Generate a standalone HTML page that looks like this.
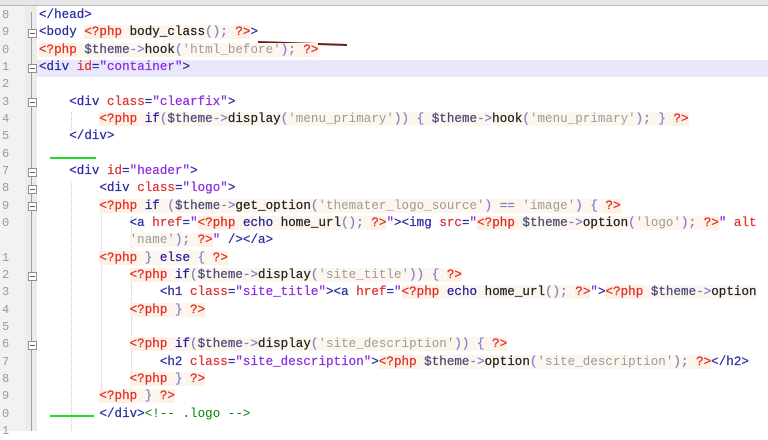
<!DOCTYPE html><html><head><meta charset="utf-8"><style>
body{margin:0;width:768px;height:431px;overflow:hidden;background:#fff;position:relative;font-family:"Liberation Mono",monospace;}
.top{position:absolute;left:0;top:0;width:768px;height:5px;background:#e6e6e6;border-bottom:1px solid #b8b8b8}
.gut{position:absolute;left:0;top:6px;width:25px;height:425px;background:#f2f2f2}
.fold{position:absolute;left:25px;top:6px;width:12px;height:425px;background:#ececec}
.hl{position:absolute;left:37px;top:60px;width:731px;height:17px;background:#e8e8fa}
.ln{position:absolute;left:0;width:22px;font-size:12px;color:#9a9a9a;line-height:17px;text-align:left;padding-left:2px}
.r{position:absolute;left:39px;font-size:12.5px;letter-spacing:0.05px;line-height:17px;white-space:pre;color:#222;font-weight:normal;-webkit-text-stroke:0.25px}
.t{color:#2a2aa0}.a{color:#e03030}.s{color:#8a2be2}.p{color:#e02a2a;background:#fdf1e4}.v{color:#4a4a7a;background:#fdf6ee}.f{color:#202020;background:#fdf6ee}.q{color:#9a9a9a;background:#fdf6ee;-webkit-text-stroke:0}.o{color:#8080c8;background:#fdf6ee}.k{color:#2020a0;background:#fdf6ee}.c{color:#008000;-webkit-text-stroke:0}.b{background:#fdf6ee}
.fb{position:absolute;left:28px;width:7px;height:7px;border:1px solid #909090;background:#fff}
.fb:after{content:"";position:absolute;left:1px;top:3px;width:5px;height:1px;background:#606060}
.vl{position:absolute;left:31px;width:1px;background:#a0a0a0}
.ig{position:absolute;width:0;border-left:1px dotted #c8c8c8}
.gr{position:absolute;height:2px;background:#22dd22}
</style></head><body>
<div class="top"></div><div class="gut"></div><div class="fold"></div><div class="hl"></div>
<div class="vl" style="top:12px;height:419px"></div>
<div class="fb" style="top:29px"></div><div class="fb" style="top:64px"></div><div class="fb" style="top:98px"></div><div class="fb" style="top:168px"></div><div class="fb" style="top:185px"></div><div class="fb" style="top:202px"></div><div class="fb" style="top:272px"></div><div class="fb" style="top:341px"></div>
<div class="ig" style="left:71px;top:112px;height:18px"></div>
<div class="ig" style="left:71px;top:182px;height:249px"></div>
<div class="ig" style="left:101px;top:199px;height:200px"></div>
<div class="ig" style="left:131px;top:216px;height:40px"></div>
<div class="ig" style="left:131px;top:268px;height:120px"></div>
<div class="gr" style="left:50px;top:157px;width:46px"></div>
<div class="gr" style="left:50px;top:415px;width:44px"></div>
<svg style="position:absolute;left:255px;top:40px" width="95" height="8"><path d="M3 2 L92 5" stroke="#6a1a1a" stroke-width="2" fill="none"/></svg>
<div class="ln" style="top:7px">8</div><div class="ln" style="top:24px">9</div><div class="ln" style="top:42px">0</div><div class="ln" style="top:59px">1</div><div class="ln" style="top:76px">2</div><div class="ln" style="top:94px">3</div><div class="ln" style="top:111px">4</div><div class="ln" style="top:128px">5</div><div class="ln" style="top:146px">6</div><div class="ln" style="top:163px">7</div><div class="ln" style="top:180px">8</div><div class="ln" style="top:198px">9</div><div class="ln" style="top:215px">0</div><div class="ln" style="top:250px">1</div><div class="ln" style="top:267px">2</div><div class="ln" style="top:284px">3</div><div class="ln" style="top:302px">4</div><div class="ln" style="top:319px">5</div><div class="ln" style="top:336px">6</div><div class="ln" style="top:354px">7</div><div class="ln" style="top:371px">8</div><div class="ln" style="top:388px">9</div><div class="ln" style="top:406px">0</div><div class="ln" style="top:423px">1</div>
<div class="r" style="top:7px"><span class="t">&lt;/head&gt;</span></div>
<div class="r" style="top:24px"><span class="t">&lt;body </span><span class="p">&lt;?php</span><span class="f"> body_class</span><span class="o">();</span><span class="b"> </span><span class="p">?&gt;</span><span class="t">&gt;</span></div>
<div class="r" style="top:42px"><span class="p">&lt;?php</span><span class="v"> $theme</span><span class="o">-&gt;</span><span class="f">hook</span><span class="o">(</span><span class="q">'html_before'</span><span class="o">);</span><span class="b"> </span><span class="p">?&gt;</span></div>
<div class="r" style="top:59px"><span class="t">&lt;div </span><span class="a">id</span><span class="t">=</span><span class="s">"container"</span><span class="t">&gt;</span></div>
<div class="r" style="top:94px">    <span class="t">&lt;div </span><span class="a">class</span><span class="t">=</span><span class="s">"clearfix"</span><span class="t">&gt;</span></div>
<div class="r" style="top:111px">        <span class="p">&lt;?php</span><span class="k"> if</span><span class="o">(</span><span class="v">$theme</span><span class="o">-&gt;</span><span class="f">display</span><span class="o">(</span><span class="q">'menu_primary'</span><span class="o">))</span><span class="b"> </span><span class="o">{</span><span class="v"> $theme</span><span class="o">-&gt;</span><span class="f">hook</span><span class="o">(</span><span class="q">'menu_primary'</span><span class="o">);</span><span class="b"> </span><span class="o">}</span><span class="b"> </span><span class="p">?&gt;</span></div>
<div class="r" style="top:128px">    <span class="t">&lt;/div&gt;</span></div>
<div class="r" style="top:163px">    <span class="t">&lt;div </span><span class="a">id</span><span class="t">=</span><span class="s">"header"</span><span class="t">&gt;</span></div>
<div class="r" style="top:180px">        <span class="t">&lt;div </span><span class="a">class</span><span class="t">=</span><span class="s">"logo"</span><span class="t">&gt;</span></div>
<div class="r" style="top:198px">        <span class="p">&lt;?php</span><span class="k"> if</span><span class="b"> </span><span class="o">(</span><span class="v">$theme</span><span class="o">-&gt;</span><span class="f">get_option</span><span class="o">(</span><span class="q">'themater_logo_source'</span><span class="o">)</span><span class="b"> </span><span class="o">==</span><span class="b"> </span><span class="q">'image'</span><span class="o">)</span><span class="b"> </span><span class="o">{</span><span class="b"> </span><span class="p">?&gt;</span></div>
<div class="r" style="top:215px">            <span class="t">&lt;a </span><span class="a">href</span><span class="t">=</span><span class="s">"</span><span class="p">&lt;?php</span><span class="k"> echo</span><span class="f"> home_url</span><span class="o">();</span><span class="b"> </span><span class="p">?&gt;</span><span class="s">"</span><span class="t">&gt;&lt;img </span><span class="a">src</span><span class="t">=</span><span class="s">"</span><span class="p">&lt;?php</span><span class="v"> $theme</span><span class="o">-&gt;</span><span class="f">option</span><span class="o">(</span><span class="q">'logo'</span><span class="o">);</span><span class="b"> </span><span class="p">?&gt;</span><span class="s">" </span><span class="a">alt</span></div>
<div class="r" style="top:232px">            <span class="q">'name'</span><span class="o">);</span><span class="b"> </span><span class="p">?&gt;</span><span class="s">"</span><span class="t"> /&gt;&lt;/a&gt;</span></div>
<div class="r" style="top:250px">        <span class="p">&lt;?php</span><span class="b"> </span><span class="o">}</span><span class="k"> else</span><span class="b"> </span><span class="o">{</span><span class="b"> </span><span class="p">?&gt;</span></div>
<div class="r" style="top:267px">            <span class="p">&lt;?php</span><span class="k"> if</span><span class="o">(</span><span class="v">$theme</span><span class="o">-&gt;</span><span class="f">display</span><span class="o">(</span><span class="q">'site_title'</span><span class="o">))</span><span class="b"> </span><span class="o">{</span><span class="b"> </span><span class="p">?&gt;</span></div>
<div class="r" style="top:284px">                <span class="t">&lt;h1 </span><span class="a">class</span><span class="t">=</span><span class="s">"site_title"</span><span class="t">&gt;&lt;a </span><span class="a">href</span><span class="t">=</span><span class="s">"</span><span class="p">&lt;?php</span><span class="k"> echo</span><span class="f"> home_url</span><span class="o">();</span><span class="b"> </span><span class="p">?&gt;</span><span class="s">"</span><span class="t">&gt;</span><span class="p">&lt;?php</span><span class="v"> $theme</span><span class="o">-&gt;</span><span class="f">option</span></div>
<div class="r" style="top:302px">            <span class="p">&lt;?php</span><span class="b"> </span><span class="o">}</span><span class="b"> </span><span class="p">?&gt;</span></div>
<div class="r" style="top:336px">            <span class="p">&lt;?php</span><span class="k"> if</span><span class="o">(</span><span class="v">$theme</span><span class="o">-&gt;</span><span class="f">display</span><span class="o">(</span><span class="q">'site_description'</span><span class="o">))</span><span class="b"> </span><span class="o">{</span><span class="b"> </span><span class="p">?&gt;</span></div>
<div class="r" style="top:354px">                <span class="t">&lt;h2 </span><span class="a">class</span><span class="t">=</span><span class="s">"site_description"</span><span class="t">&gt;</span><span class="p">&lt;?php</span><span class="v"> $theme</span><span class="o">-&gt;</span><span class="f">option</span><span class="o">(</span><span class="q">'site_description'</span><span class="o">);</span><span class="b"> </span><span class="p">?&gt;</span><span class="t">&lt;/h2&gt;</span></div>
<div class="r" style="top:371px">            <span class="p">&lt;?php</span><span class="b"> </span><span class="o">}</span><span class="b"> </span><span class="p">?&gt;</span></div>
<div class="r" style="top:388px">        <span class="p">&lt;?php</span><span class="b"> </span><span class="o">}</span><span class="b"> </span><span class="p">?&gt;</span></div>
<div class="r" style="top:406px">        <span class="t">&lt;/div&gt;</span><span class="c">&lt;!-- .logo --&gt;</span></div>
</body></html>
